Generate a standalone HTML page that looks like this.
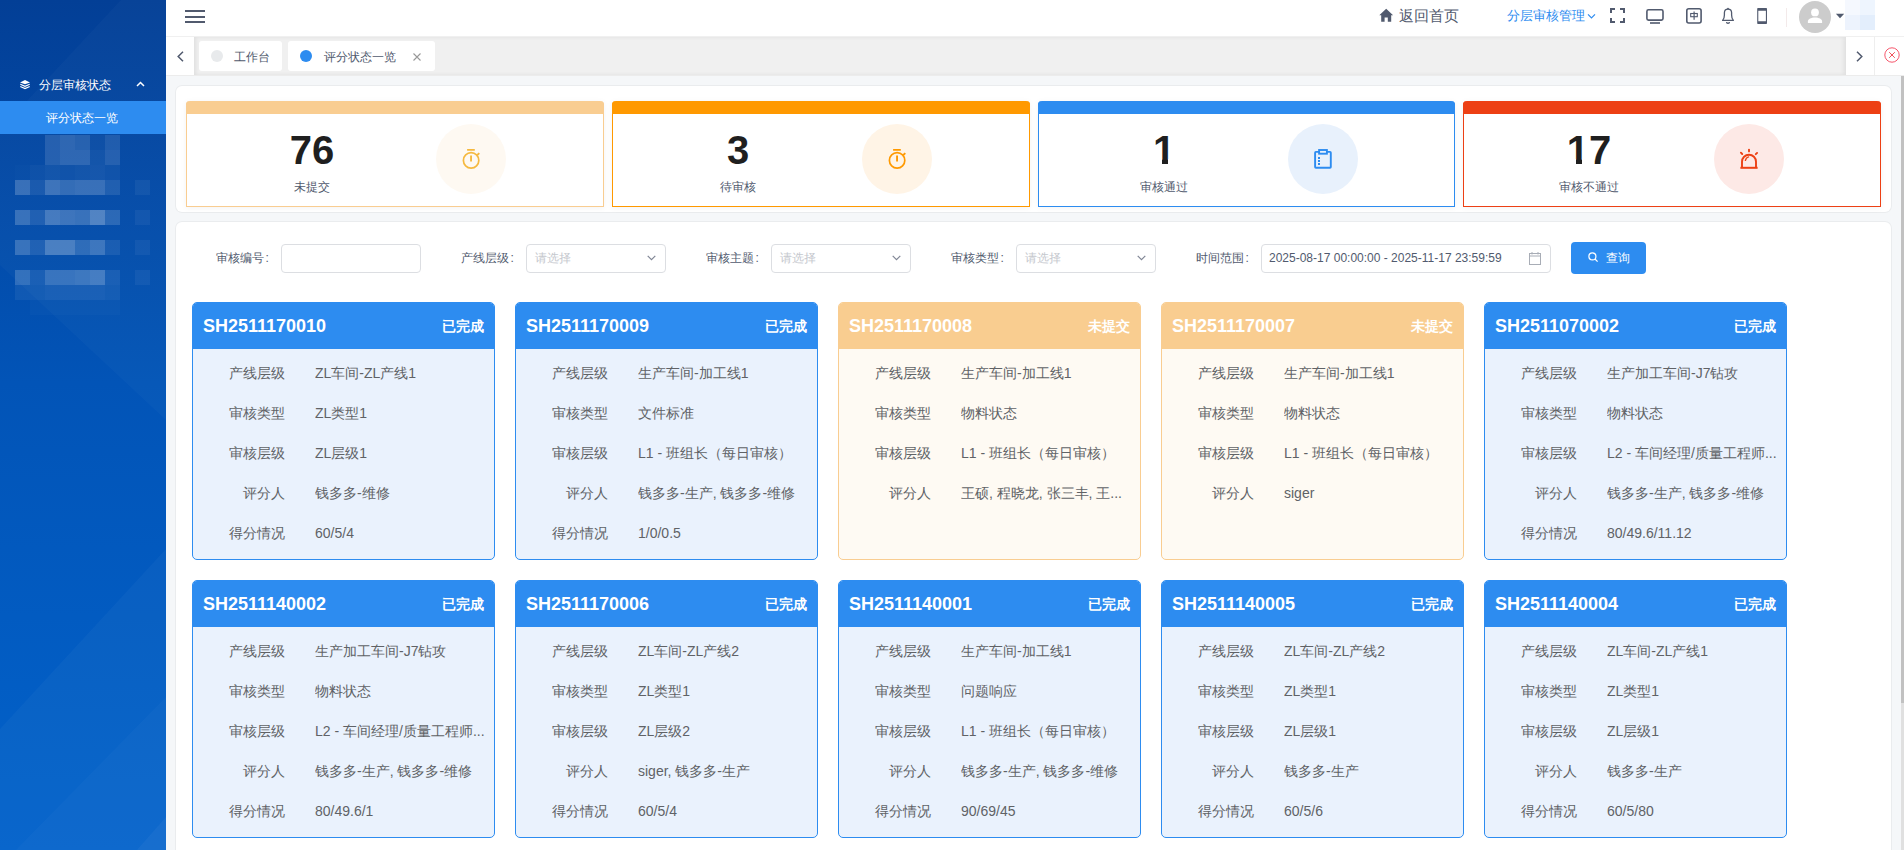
<!DOCTYPE html>
<html><head><meta charset="utf-8">
<style>
*{box-sizing:border-box;margin:0;padding:0}
html,body{width:1904px;height:850px;overflow:hidden;background:#f5f7f9;font-family:"Liberation Sans",sans-serif;color:#515a6e;font-size:12px}
.abs{position:absolute}
#sidebar{position:absolute;left:0;top:0;width:166px;height:850px;background:linear-gradient(180deg,#033f96 0%,#0254b7 45%,#0262cb 100%);overflow:hidden}
#header{position:absolute;left:166px;top:0;width:1738px;height:37px;background:#fff;border-bottom:1px solid #f0f0f0}
#tabs{position:absolute;left:166px;top:37px;width:1738px;height:39px;background:#f0f0f0;border-bottom:1px solid #ececec;box-shadow:inset 0 0 4px rgba(0,0,0,0.07);overflow:hidden}
.panel{position:absolute;background:#fff;border-radius:6px;box-shadow:0 0 0 1px rgba(0,0,0,0.045)}
.stat{position:absolute;top:101px;width:418px;height:106px;border:1px solid;border-top:0;border-radius:4px 4px 0 0;background:#fff;box-shadow:0 1px 6px rgba(0,0,0,0.05)}
.stat .bar{position:absolute;left:-1px;right:-1px;top:0;height:13px;border-radius:4px 4px 0 0}
.stat .num{position:absolute;top:27px;width:200px;text-align:center;font-size:40px;font-weight:bold;color:#1f1f1f;line-height:44px}
.stat .lbl{position:absolute;top:79px;width:200px;text-align:center;font-size:12px;color:#515a6e;line-height:14px}
.stat .ic{position:absolute;top:23px;width:70px;height:70px;border-radius:50%}
.cl{font-style:normal;margin-left:1.5px}
.flabel{position:absolute;top:250px;font-size:12px;color:#515a6e;line-height:16px}
.finput{position:absolute;top:244px;height:29px;border:1px solid #dcdee2;border-radius:4px;background:#fff}
.ph{position:absolute;left:8px;top:5px;color:#c5c8ce;font-size:12px;line-height:16px}
.card{position:absolute;width:303px;height:258px;border:1px solid #2d8cf0;border-radius:5px;background:#eaf2fd;overflow:hidden}
.card .hd{position:absolute;left:0;top:0;right:0;height:46px;background:#2d8cf0;color:#fff}
.card .no{position:absolute;left:10px;top:13px;font-size:18px;font-weight:bold;line-height:20px}
.card .st{position:absolute;right:10px;top:15px;font-size:14px;font-weight:bold;line-height:16px}
.card .row{position:absolute;left:0;width:303px;height:20px;font-size:14px;line-height:20px;color:#606266}
.card .row .k{position:absolute;right:211px;white-space:nowrap}
.card .row .v{position:absolute;left:122px;white-space:nowrap;width:175px;overflow:hidden;text-overflow:ellipsis}
.card.o{border-color:#f9cd91;background:#fefaf3}
.card.o .hd{background:#f9cd90}
</style></head><body>
<div id="sidebar">
<svg class="abs" style="left:0;top:0" width="166" height="850" viewBox="0 0 166 850">
<polygon points="121,0 166,0 166,420 0,265 0,130" fill="#ffffff" opacity="0.022"/>
<polygon points="166,549 166,850 0,850 0,729" fill="#ffffff" opacity="0.03"/>
<polygon points="166,697 166,850 16,850" fill="#ffffff" opacity="0.025"/>
<polygon points="166,817 166,850 137,850" fill="#ffffff" opacity="0.04"/>
</svg>
<svg class="abs" style="left:20px;top:80px" width="10" height="10" viewBox="0 0 10 10"><path d="M5 0L10 2.5L5 4.3L0 2.5Z" fill="#fff"/><path d="M0.3 4.3L5 6.3L9.7 4.3M0.3 6.5L5 8.6L9.7 6.5" fill="none" stroke="#fff" stroke-width="1.2"/></svg>
<div class="abs" style="left:39px;top:77px;font-size:12px;line-height:16px;color:#fff">分层审核状态</div>
<svg class="abs" style="left:136px;top:81px" width="9" height="6" viewBox="0 0 9 6"><path d="M1 5L4.5 1.5L8 5" fill="none" stroke="#fff" stroke-width="1.5"/></svg>
<div class="abs" style="left:0;top:101px;width:166px;height:33px;background:#2d8cf0"></div>
<div class="abs" style="left:46px;top:110px;font-size:12px;line-height:16px;color:#fff">评分状态一览</div>
<div class="abs" style="left:45px;top:135px;width:15px;height:15px;background:rgba(255,255,255,0.12)"></div><div class="abs" style="left:60px;top:135px;width:15px;height:15px;background:rgba(255,255,255,0.16)"></div><div class="abs" style="left:75px;top:135px;width:15px;height:15px;background:rgba(255,255,255,0.13)"></div><div class="abs" style="left:90px;top:135px;width:15px;height:15px;background:rgba(255,255,255,0.03)"></div><div class="abs" style="left:105px;top:135px;width:15px;height:15px;background:rgba(255,255,255,0.1)"></div><div class="abs" style="left:45px;top:150px;width:15px;height:15px;background:rgba(255,255,255,0.12)"></div><div class="abs" style="left:60px;top:150px;width:15px;height:15px;background:rgba(255,255,255,0.16)"></div><div class="abs" style="left:75px;top:150px;width:15px;height:15px;background:rgba(255,255,255,0.16)"></div><div class="abs" style="left:90px;top:150px;width:15px;height:15px;background:rgba(255,255,255,0.05)"></div><div class="abs" style="left:105px;top:150px;width:15px;height:15px;background:rgba(255,255,255,0.12)"></div><div class="abs" style="left:15px;top:165px;width:15px;height:15px;background:rgba(255,255,255,0.01)"></div><div class="abs" style="left:30px;top:165px;width:15px;height:15px;background:rgba(255,255,255,0.03)"></div><div class="abs" style="left:45px;top:165px;width:15px;height:15px;background:rgba(255,255,255,0.05)"></div><div class="abs" style="left:60px;top:165px;width:15px;height:15px;background:rgba(255,255,255,0.04)"></div><div class="abs" style="left:75px;top:165px;width:15px;height:15px;background:rgba(255,255,255,0.05)"></div><div class="abs" style="left:90px;top:165px;width:15px;height:15px;background:rgba(255,255,255,0.06)"></div><div class="abs" style="left:105px;top:165px;width:15px;height:15px;background:rgba(255,255,255,0.04)"></div><div class="abs" style="left:15px;top:180px;width:15px;height:15px;background:rgba(255,255,255,0.2)"></div><div class="abs" style="left:30px;top:180px;width:15px;height:15px;background:rgba(255,255,255,0.08)"></div><div class="abs" style="left:45px;top:180px;width:15px;height:15px;background:rgba(255,255,255,0.22)"></div><div class="abs" style="left:60px;top:180px;width:15px;height:15px;background:rgba(255,255,255,0.18)"></div><div class="abs" style="left:75px;top:180px;width:15px;height:15px;background:rgba(255,255,255,0.2)"></div><div class="abs" style="left:90px;top:180px;width:15px;height:15px;background:rgba(255,255,255,0.2)"></div><div class="abs" style="left:105px;top:180px;width:15px;height:15px;background:rgba(255,255,255,0.1)"></div><div class="abs" style="left:135px;top:180px;width:15px;height:15px;background:rgba(255,255,255,0.05)"></div><div class="abs" style="left:15px;top:210px;width:15px;height:15px;background:rgba(255,255,255,0.2)"></div><div class="abs" style="left:30px;top:210px;width:15px;height:15px;background:rgba(255,255,255,0.1)"></div><div class="abs" style="left:45px;top:210px;width:15px;height:15px;background:rgba(255,255,255,0.25)"></div><div class="abs" style="left:60px;top:210px;width:15px;height:15px;background:rgba(255,255,255,0.22)"></div><div class="abs" style="left:75px;top:210px;width:15px;height:15px;background:rgba(255,255,255,0.2)"></div><div class="abs" style="left:90px;top:210px;width:15px;height:15px;background:rgba(255,255,255,0.3)"></div><div class="abs" style="left:105px;top:210px;width:15px;height:15px;background:rgba(255,255,255,0.15)"></div><div class="abs" style="left:135px;top:210px;width:15px;height:15px;background:rgba(255,255,255,0.05)"></div><div class="abs" style="left:15px;top:240px;width:15px;height:15px;background:rgba(255,255,255,0.2)"></div><div class="abs" style="left:30px;top:240px;width:15px;height:15px;background:rgba(255,255,255,0.1)"></div><div class="abs" style="left:45px;top:240px;width:15px;height:15px;background:rgba(255,255,255,0.27)"></div><div class="abs" style="left:60px;top:240px;width:15px;height:15px;background:rgba(255,255,255,0.27)"></div><div class="abs" style="left:75px;top:240px;width:15px;height:15px;background:rgba(255,255,255,0.16)"></div><div class="abs" style="left:90px;top:240px;width:15px;height:15px;background:rgba(255,255,255,0.22)"></div><div class="abs" style="left:105px;top:240px;width:15px;height:15px;background:rgba(255,255,255,0.08)"></div><div class="abs" style="left:135px;top:240px;width:15px;height:15px;background:rgba(255,255,255,0.05)"></div><div class="abs" style="left:15px;top:270px;width:15px;height:15px;background:rgba(255,255,255,0.18)"></div><div class="abs" style="left:30px;top:270px;width:15px;height:15px;background:rgba(255,255,255,0.08)"></div><div class="abs" style="left:45px;top:270px;width:15px;height:15px;background:rgba(255,255,255,0.2)"></div><div class="abs" style="left:60px;top:270px;width:15px;height:15px;background:rgba(255,255,255,0.2)"></div><div class="abs" style="left:75px;top:270px;width:15px;height:15px;background:rgba(255,255,255,0.22)"></div><div class="abs" style="left:90px;top:270px;width:15px;height:15px;background:rgba(255,255,255,0.25)"></div><div class="abs" style="left:105px;top:270px;width:15px;height:15px;background:rgba(255,255,255,0.08)"></div><div class="abs" style="left:135px;top:270px;width:15px;height:15px;background:rgba(255,255,255,0.05)"></div><div class="abs" style="left:15px;top:285px;width:15px;height:15px;background:rgba(255,255,255,0.06)"></div><div class="abs" style="left:30px;top:285px;width:15px;height:15px;background:rgba(255,255,255,0.06)"></div><div class="abs" style="left:45px;top:285px;width:15px;height:15px;background:rgba(255,255,255,0.08)"></div><div class="abs" style="left:60px;top:285px;width:15px;height:15px;background:rgba(255,255,255,0.08)"></div><div class="abs" style="left:75px;top:285px;width:15px;height:15px;background:rgba(255,255,255,0.08)"></div><div class="abs" style="left:90px;top:285px;width:15px;height:15px;background:rgba(255,255,255,0.08)"></div><div class="abs" style="left:105px;top:285px;width:15px;height:15px;background:rgba(255,255,255,0.06)"></div><div class="abs" style="left:30px;top:300px;width:15px;height:15px;background:rgba(255,255,255,0.02)"></div><div class="abs" style="left:45px;top:300px;width:15px;height:15px;background:rgba(255,255,255,0.02)"></div><div class="abs" style="left:60px;top:300px;width:15px;height:15px;background:rgba(255,255,255,0.02)"></div><div class="abs" style="left:75px;top:300px;width:15px;height:15px;background:rgba(255,255,255,0.02)"></div><div class="abs" style="left:90px;top:300px;width:15px;height:15px;background:rgba(255,255,255,0.02)"></div><div class="abs" style="left:105px;top:300px;width:15px;height:15px;background:rgba(255,255,255,0.02)"></div>
</div>
<div id="header"></div>
<svg class="abs" style="left:0;top:0" width="1904" height="36" viewBox="0 0 1904 36">
<path d="M185 11H205M185 17H205M185 22H205" stroke="#515a6e" stroke-width="2"/>
<path d="M1386.2 8.8L1379.3 15.2H1381.2V21.8H1384.6V17.6H1387.8V21.8H1391.2V15.2H1393.1Z" fill="#515a6e"/>
<path d="M1588 14.3L1591.5 17.9L1595 14.3" fill="none" stroke="#2d8cf0" stroke-width="1.2"/>
<path d="M1610 8H1615V10H1612V13H1610Z M1625 8H1620V10H1623V13H1625Z M1610 23H1615V21H1612V18H1610Z M1625 23H1620V21H1623V18H1625Z" fill="#515a6e"/>
<rect x="1646.9" y="9.8" width="16.1" height="10.3" rx="1.6" fill="none" stroke="#515a6e" stroke-width="1.6"/>
<rect x="1650" y="22.2" width="10" height="1.6" fill="#515a6e"/>
<rect x="1686.8" y="8.8" width="14.3" height="14.2" rx="2" fill="none" stroke="#515a6e" stroke-width="1.6"/>
<rect x="1690.7" y="13.5" width="6.6" height="3.2" fill="none" stroke="#515a6e" stroke-width="1.1"/>
<path d="M1694.1 11.5V19.7" stroke="#515a6e" stroke-width="1.2"/>
<path d="M1722.6 20.4C1723.8 19.2 1724.4 17.5 1724.4 15V12.8C1724.4 10.6 1726 9.2 1728 9.2C1730 9.2 1731.6 10.6 1731.6 12.8V15C1731.6 17.5 1732.2 19.2 1733.4 20.4Z" fill="none" stroke="#515a6e" stroke-width="1.3" stroke-linejoin="round"/>
<circle cx="1728" cy="8.6" r="0.9" fill="#515a6e"/>
<path d="M1726.6 22A1.4 1.4 0 0 0 1729.4 22" fill="none" stroke="#515a6e" stroke-width="1.3"/>
<path d="M1758.2 8.1H1766C1766.6 8.1 1767 8.5 1767 9.1V22.9C1767 23.5 1766.6 23.9 1766 23.9H1758.2C1757.6 23.9 1757.2 23.5 1757.2 22.9V9.1C1757.2 8.5 1757.6 8.1 1758.2 8.1Z M1758.3 10.8V21.2H1765.9V10.8Z" fill="#515a6e" fill-rule="evenodd"/>
<rect x="1786" y="8" width="1" height="19" fill="#f3eaea"/>
<circle cx="1815" cy="17" r="16" fill="#ccc"/>
<circle cx="1815" cy="12.4" r="3.9" fill="#fff"/>
<path d="M1807.9 23.1V21.5C1807.9 19.2 1811 17.6 1815 17.6S1822.1 19.2 1822.1 21.5V23.1Z" fill="#fff"/>
<path d="M1835.9 13.7H1844.2L1840 18.2Z" fill="#515a6e"/>
<rect x="1845" y="0" width="15" height="15" fill="#f5f8fe"/>
<rect x="1860" y="0" width="15" height="15" fill="#eef5fe"/>
<rect x="1845" y="15" width="15" height="15" fill="#edf3fd"/>
<rect x="1860" y="15" width="15" height="15" fill="#e3eefc"/>
</svg>
<div class="abs" style="left:1399px;top:6px;font-size:15px;line-height:20px;color:#515a6e">返回首页</div>
<div class="abs" style="left:1507px;top:7px;font-size:13px;line-height:18px;color:#2d8cf0">分层审核管理</div>
<div id="tabs">
<div class="abs" style="left:0;top:0;width:28px;height:38px;background:#fff;box-shadow:2px 0 4px rgba(0,0,0,0.07)"></div>
<svg class="abs" style="left:11px;top:14px" width="7" height="11" viewBox="0 0 7 11"><path d="M6 0.8L1.2 5.5L6 10.2" fill="none" stroke="#515a6e" stroke-width="1.5"/></svg>
<div class="abs" style="left:33px;top:4px;width:83px;height:30px;background:#fff;border-radius:3px"></div>
<div class="abs" style="left:45px;top:13px;width:12px;height:12px;border-radius:50%;background:#e8eaec"></div>
<div class="abs" style="left:68px;top:12px;font-size:12px;line-height:16px;color:#515a6e">工作台</div>
<div class="abs" style="left:122px;top:4px;width:147px;height:30px;background:#fff;border-radius:3px"></div>
<div class="abs" style="left:134px;top:13px;width:12px;height:12px;border-radius:50%;background:#2d8cf0"></div>
<div class="abs" style="left:158px;top:12px;font-size:12px;line-height:16px;color:#515a6e">评分状态一览</div>
<svg class="abs" style="left:247px;top:16px" width="8" height="8" viewBox="0 0 8 8"><path d="M0.5 0.5L7.5 7.5M7.5 0.5L0.5 7.5" stroke="#999" stroke-width="1.1"/></svg>
<div class="abs" style="left:1680px;top:0;width:58px;height:38px;background:#fff;box-shadow:-2px 0 5px rgba(0,0,0,0.08)"></div>
<div class="abs" style="left:1708px;top:0;width:1px;height:38px;background:#eee"></div>
<svg class="abs" style="left:1690px;top:14px" width="7" height="11" viewBox="0 0 7 11"><path d="M1 0.8L5.8 5.5L1 10.2" fill="none" stroke="#515a6e" stroke-width="1.5"/></svg>
<svg class="abs" style="left:1718px;top:10px" width="16" height="16" viewBox="0 0 16 16"><circle cx="8" cy="8" r="7.2" fill="none" stroke="#f5576c" stroke-width="1"/><path d="M5.2 5.2L10.8 10.8M10.8 5.2L5.2 10.8" stroke="#f0505a" stroke-width="1"/></svg>
</div>
<div class="panel" style="left:176px;top:86px;width:1715px;height:126px"></div>
<div class="panel" style="left:176px;top:222px;width:1715px;height:700px"></div>
<div class="stat" style="left:186px;width:418px;border-color:#f9cd91"><div class="bar" style="background:#f9cd91"></div><div class="num" style="left:25px">76</div><div class="lbl" style="left:25px">未提交</div><div class="ic" style="left:249px;background:#fef9f2"><svg class="abs" style="left:0;top:0" width="70" height="70" viewBox="0 0 70 70"><circle cx="35.1" cy="36.4" r="7.7" fill="none" stroke="#f5b940" stroke-width="1.7"/><path d="M31.1 25.9H38.8M35.05 31.4V37.4M41.1 31.2L43.3 29.1" stroke="#f5b940" stroke-width="1.9"/></svg></div></div>
<div class="stat" style="left:612px;width:418px;border-color:#ff9900"><div class="bar" style="background:#ff9900"></div><div class="num" style="left:25px">3</div><div class="lbl" style="left:25px">待审核</div><div class="ic" style="left:249px;background:#fff4e6"><svg class="abs" style="left:0;top:0" width="70" height="70" viewBox="0 0 70 70"><circle cx="35.1" cy="36.4" r="7.7" fill="none" stroke="#ff9900" stroke-width="1.7"/><path d="M31.1 25.9H38.8M35.05 31.4V37.4M41.1 31.2L43.3 29.1" stroke="#ff9900" stroke-width="1.9"/></svg></div></div>
<div class="stat" style="left:1038px;width:417px;border-color:#2d8cf0"><div class="bar" style="background:#2d8cf0"></div><div class="num" style="left:25px">1</div><div class="lbl" style="left:25px">审核通过</div><div class="ic" style="left:249px;background:#e8f1fc"><svg class="abs" style="left:0;top:0" width="70" height="70" viewBox="0 0 70 70"><rect x="27.1" y="27.9" width="15.7" height="15.9" rx="0.8" fill="none" stroke="#2d8cf0" stroke-width="1.9"/><rect x="31.1" y="26" width="7.8" height="3.7" fill="#e8f1fc" stroke="#2d8cf0" stroke-width="1.9"/><path d="M30 34H32M30 37H32M30 40H32" stroke="#2d8cf0" stroke-width="1.8"/></svg></div></div>
<div class="stat" style="left:1463px;width:418px;border-color:#ed4014"><div class="bar" style="background:#ed4014"></div><div class="num" style="left:25px">17</div><div class="lbl" style="left:25px">审核不通过</div><div class="ic" style="left:250px;background:#fde9e6"><svg class="abs" style="left:0;top:0" width="70" height="70" viewBox="0 0 70 70"><path d="M28 43.8V37.7A7 7 0 0 1 42 37.7V43.8" fill="none" stroke="#ed4014" stroke-width="1.9"/><path d="M26.4 43.8H43.6" stroke="#ed4014" stroke-width="2"/><path d="M35 25.6V27.4M26.9 28.7L28.2 30M43.1 28.9L41.8 30.2" stroke="#ed4014" stroke-width="1.9" stroke-linecap="round"/><path d="M31.4 36.3A4.5 4.5 0 0 1 34.5 32.9" fill="none" stroke="#ed4014" stroke-width="1.5" stroke-linecap="round"/></svg></div></div>
<div class="abs" style="left:1154px;top:159px;width:8px;height:5px;background:#fff"></div>
<div class="abs" style="left:1168px;top:159px;width:8px;height:5px;background:#fff"></div>
<div class="abs" style="left:1567px;top:159px;width:9px;height:5px;background:#fff"></div>
<div class="abs" style="left:1582px;top:159px;width:8px;height:5px;background:#fff"></div>
<div class="flabel" style="left:216px">审核编号<i class="cl">:</i></div>
<div class="finput" style="left:281px;width:140px"></div>
<div class="flabel" style="left:461px">产线层级<i class="cl">:</i></div>
<div class="finput" style="left:526px;width:140px"><span class="ph">请选择</span><svg class="abs" style="right:9px;top:10px" width="9" height="6" viewBox="0 0 9 6"><path d="M0.7 0.9L4.5 4.7L8.3 0.9" fill="none" stroke="#808695" stroke-width="1.2"/></svg></div>
<div class="flabel" style="left:706px">审核主题<i class="cl">:</i></div>
<div class="finput" style="left:771px;width:140px"><span class="ph">请选择</span><svg class="abs" style="right:9px;top:10px" width="9" height="6" viewBox="0 0 9 6"><path d="M0.7 0.9L4.5 4.7L8.3 0.9" fill="none" stroke="#808695" stroke-width="1.2"/></svg></div>
<div class="flabel" style="left:951px">审核类型<i class="cl">:</i></div>
<div class="finput" style="left:1016px;width:140px"><span class="ph">请选择</span><svg class="abs" style="right:9px;top:10px" width="9" height="6" viewBox="0 0 9 6"><path d="M0.7 0.9L4.5 4.7L8.3 0.9" fill="none" stroke="#808695" stroke-width="1.2"/></svg></div>
<div class="flabel" style="left:1196px">时间范围<i class="cl">:</i></div>
<div class="finput" style="left:1261px;width:290px"><span class="ph" style="color:#515a6e;left:7px">2025-08-17 00:00:00 - 2025-11-17 23:59:59</span><svg class="abs" style="left:267px;top:7px" width="13" height="13" viewBox="0 0 13 13"><rect x="0.5" y="1.5" width="11" height="11" fill="none" stroke="#a8adb6" stroke-width="1"/><path d="M0.5 4H11.5M3 0V2.5M9 0V2.5" stroke="#a8adb6" stroke-width="1"/></svg></div>
<div class="abs" style="left:1571px;top:242px;width:75px;height:32px;background:#2d8cf0;border-radius:4px"></div>
<svg class="abs" style="left:1588px;top:252px" width="11" height="11" viewBox="0 0 11 11"><circle cx="4.4" cy="4.4" r="3.5" fill="none" stroke="#fff" stroke-width="1.2"/><path d="M7 7L9.6 9.6" stroke="#fff" stroke-width="1.3"/></svg>
<div class="abs" style="left:1606px;top:250px;font-size:12px;line-height:16px;color:#fff">查询</div>
<div class="card b" style="left:192px;top:302px"><div class="hd"><span class="no">SH2511170010</span><span class="st">已完成</span></div><div class="row" style="top:60px"><span class="k">产线层级</span><span class="v">ZL车间-ZL产线1</span></div><div class="row" style="top:100px"><span class="k">审核类型</span><span class="v">ZL类型1</span></div><div class="row" style="top:140px"><span class="k">审核层级</span><span class="v">ZL层级1</span></div><div class="row" style="top:180px"><span class="k">评分人</span><span class="v">钱多多-维修</span></div><div class="row" style="top:220px"><span class="k">得分情况</span><span class="v">60/5/4</span></div></div>
<div class="card b" style="left:515px;top:302px"><div class="hd"><span class="no">SH2511170009</span><span class="st">已完成</span></div><div class="row" style="top:60px"><span class="k">产线层级</span><span class="v">生产车间-加工线1</span></div><div class="row" style="top:100px"><span class="k">审核类型</span><span class="v">文件标准</span></div><div class="row" style="top:140px"><span class="k">审核层级</span><span class="v">L1 - 班组长（每日审核）</span></div><div class="row" style="top:180px"><span class="k">评分人</span><span class="v">钱多多-生产, 钱多多-维修</span></div><div class="row" style="top:220px"><span class="k">得分情况</span><span class="v">1/0/0.5</span></div></div>
<div class="card o" style="left:838px;top:302px"><div class="hd"><span class="no">SH2511170008</span><span class="st">未提交</span></div><div class="row" style="top:60px"><span class="k">产线层级</span><span class="v">生产车间-加工线1</span></div><div class="row" style="top:100px"><span class="k">审核类型</span><span class="v">物料状态</span></div><div class="row" style="top:140px"><span class="k">审核层级</span><span class="v">L1 - 班组长（每日审核）</span></div><div class="row" style="top:180px"><span class="k">评分人</span><span class="v">王硕, 程晓龙, 张三丰, 王...</span></div></div>
<div class="card o" style="left:1161px;top:302px"><div class="hd"><span class="no">SH2511170007</span><span class="st">未提交</span></div><div class="row" style="top:60px"><span class="k">产线层级</span><span class="v">生产车间-加工线1</span></div><div class="row" style="top:100px"><span class="k">审核类型</span><span class="v">物料状态</span></div><div class="row" style="top:140px"><span class="k">审核层级</span><span class="v">L1 - 班组长（每日审核）</span></div><div class="row" style="top:180px"><span class="k">评分人</span><span class="v">siger</span></div></div>
<div class="card b" style="left:1484px;top:302px"><div class="hd"><span class="no">SH2511070002</span><span class="st">已完成</span></div><div class="row" style="top:60px"><span class="k">产线层级</span><span class="v">生产加工车间-J7钻攻</span></div><div class="row" style="top:100px"><span class="k">审核类型</span><span class="v">物料状态</span></div><div class="row" style="top:140px"><span class="k">审核层级</span><span class="v">L2 - 车间经理/质量工程师...</span></div><div class="row" style="top:180px"><span class="k">评分人</span><span class="v">钱多多-生产, 钱多多-维修</span></div><div class="row" style="top:220px"><span class="k">得分情况</span><span class="v">80/49.6/11.12</span></div></div>
<div class="card b" style="left:192px;top:580px"><div class="hd"><span class="no">SH2511140002</span><span class="st">已完成</span></div><div class="row" style="top:60px"><span class="k">产线层级</span><span class="v">生产加工车间-J7钻攻</span></div><div class="row" style="top:100px"><span class="k">审核类型</span><span class="v">物料状态</span></div><div class="row" style="top:140px"><span class="k">审核层级</span><span class="v">L2 - 车间经理/质量工程师...</span></div><div class="row" style="top:180px"><span class="k">评分人</span><span class="v">钱多多-生产, 钱多多-维修</span></div><div class="row" style="top:220px"><span class="k">得分情况</span><span class="v">80/49.6/1</span></div></div>
<div class="card b" style="left:515px;top:580px"><div class="hd"><span class="no">SH2511170006</span><span class="st">已完成</span></div><div class="row" style="top:60px"><span class="k">产线层级</span><span class="v">ZL车间-ZL产线2</span></div><div class="row" style="top:100px"><span class="k">审核类型</span><span class="v">ZL类型1</span></div><div class="row" style="top:140px"><span class="k">审核层级</span><span class="v">ZL层级2</span></div><div class="row" style="top:180px"><span class="k">评分人</span><span class="v">siger, 钱多多-生产</span></div><div class="row" style="top:220px"><span class="k">得分情况</span><span class="v">60/5/4</span></div></div>
<div class="card b" style="left:838px;top:580px"><div class="hd"><span class="no">SH2511140001</span><span class="st">已完成</span></div><div class="row" style="top:60px"><span class="k">产线层级</span><span class="v">生产车间-加工线1</span></div><div class="row" style="top:100px"><span class="k">审核类型</span><span class="v">问题响应</span></div><div class="row" style="top:140px"><span class="k">审核层级</span><span class="v">L1 - 班组长（每日审核）</span></div><div class="row" style="top:180px"><span class="k">评分人</span><span class="v">钱多多-生产, 钱多多-维修</span></div><div class="row" style="top:220px"><span class="k">得分情况</span><span class="v">90/69/45</span></div></div>
<div class="card b" style="left:1161px;top:580px"><div class="hd"><span class="no">SH2511140005</span><span class="st">已完成</span></div><div class="row" style="top:60px"><span class="k">产线层级</span><span class="v">ZL车间-ZL产线2</span></div><div class="row" style="top:100px"><span class="k">审核类型</span><span class="v">ZL类型1</span></div><div class="row" style="top:140px"><span class="k">审核层级</span><span class="v">ZL层级1</span></div><div class="row" style="top:180px"><span class="k">评分人</span><span class="v">钱多多-生产</span></div><div class="row" style="top:220px"><span class="k">得分情况</span><span class="v">60/5/6</span></div></div>
<div class="card b" style="left:1484px;top:580px"><div class="hd"><span class="no">SH2511140004</span><span class="st">已完成</span></div><div class="row" style="top:60px"><span class="k">产线层级</span><span class="v">ZL车间-ZL产线1</span></div><div class="row" style="top:100px"><span class="k">审核类型</span><span class="v">ZL类型1</span></div><div class="row" style="top:140px"><span class="k">审核层级</span><span class="v">ZL层级1</span></div><div class="row" style="top:180px"><span class="k">评分人</span><span class="v">钱多多-生产</span></div><div class="row" style="top:220px"><span class="k">得分情况</span><span class="v">60/5/80</span></div></div>
<div class="abs" style="left:1901px;top:76px;width:3px;height:627px;background:#c1c1c1"></div>
<div class="abs" style="left:1901px;top:703px;width:3px;height:147px;background:#e0e0e0"></div>
</body></html>
